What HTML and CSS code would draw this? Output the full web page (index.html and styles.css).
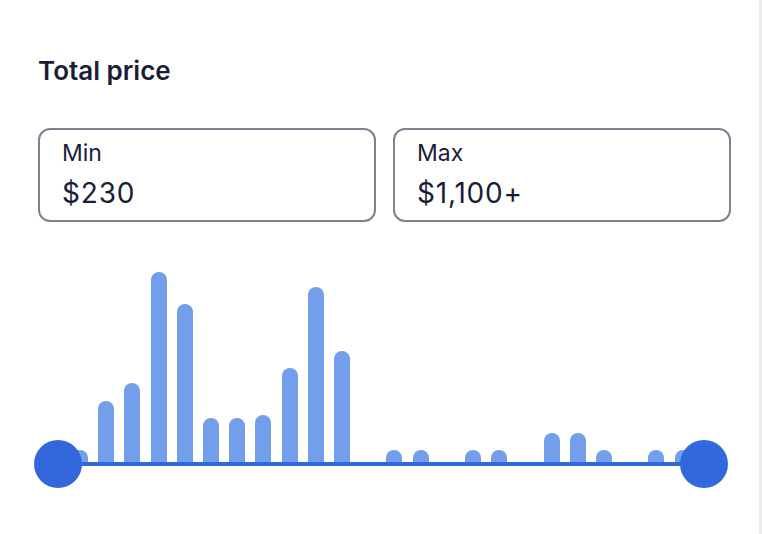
FILE: index.html
```html
<!DOCTYPE html>
<html>
<head>
<meta charset="utf-8">
<link rel="stylesheet" href="styles.css">
</head>
<body>
<div class="panel">
  <h2 class="title">Total price</h2>
  <div class="fields">
    <div class="field">
      <div class="label">Min</div>
      <div class="value">$230</div>
    </div>
    <div class="field">
      <div class="label">Max</div>
      <div class="value">$1,100+</div>
    </div>
  </div>
  <div class="chart">
    <div class="bars">
      <span class="bar" style="height:12px"></span>
      <span class="bar" style="height:61px"></span>
      <span class="bar" style="height:79px"></span>
      <span class="bar" style="height:190px"></span>
      <span class="bar" style="height:158px"></span>
      <span class="bar" style="height:44px"></span>
      <span class="bar" style="height:44px"></span>
      <span class="bar" style="height:47px"></span>
      <span class="bar" style="height:94px"></span>
      <span class="bar" style="height:175px"></span>
      <span class="bar" style="height:111px"></span>
      <span class="bar" style="height:0px"></span>
      <span class="bar" style="height:12px"></span>
      <span class="bar" style="height:12px"></span>
      <span class="bar" style="height:0px"></span>
      <span class="bar" style="height:12px"></span>
      <span class="bar" style="height:12px"></span>
      <span class="bar" style="height:0px"></span>
      <span class="bar" style="height:29px"></span>
      <span class="bar" style="height:29px"></span>
      <span class="bar" style="height:12px"></span>
      <span class="bar" style="height:0px"></span>
      <span class="bar" style="height:12px"></span>
      <span class="bar" style="height:12px"></span>
    </div>
    <div class="track"></div>
    <div class="handle handle-min"></div>
    <div class="handle handle-max"></div>
  </div>
</div>
</body>
</html>
```

FILE: styles.css
```css
html, body {
  margin: 0;
  padding: 0;
  background: #ffffff;
}
body {
  width: 762px;
  height: 534px;
  overflow: hidden;
  box-sizing: border-box;
  border-right: 3px solid #ebebeb;
  font-family: Inter, "Noto Sans", sans-serif;
  color: #1b1d38;
}
.panel {
  padding: 55px 27px 0 38px;
}
.title {
  margin: 0;
  font-size: 26px;
  line-height: 32px;
  font-weight: 600;
  letter-spacing: 0;
}
.fields {
  margin-top: 41px;
  display: grid;
  grid-template-columns: 338px 338px;
  column-gap: 17px;
}
.field {
  box-sizing: border-box;
  height: 94px;
  border: 2px solid #7f8090;
  border-radius: 12px;
  padding: 9px 22px 0 22px;
}
.label {
  font-size: 23px;
  line-height: 28px;
}
.value {
  margin-top: 9px;
  font-size: 28px;
  line-height: 34px;
  letter-spacing: 0.8px;
}
.chart {
  position: relative;
  margin: 40px 0 0 -4px;
  width: 694px;
  height: 226px;
}
.bars {
  height: 200px;
  padding: 0 37px 0 38px;
  display: flex;
  justify-content: space-between;
  align-items: flex-end;
}
.bar {
  width: 16px;
  background: #729eea;
  border-radius: 8px 8px 0 0;
}
.track {
  position: absolute;
  left: 24px;
  right: 24px;
  top: 200px;
  height: 4px;
  background: #3268db;
}
.handle {
  position: absolute;
  top: 178px;
  width: 48px;
  height: 48px;
  border-radius: 50%;
  background: #3268db;
}
.handle-min { left: 0; }
.handle-max { right: 0; }
```
